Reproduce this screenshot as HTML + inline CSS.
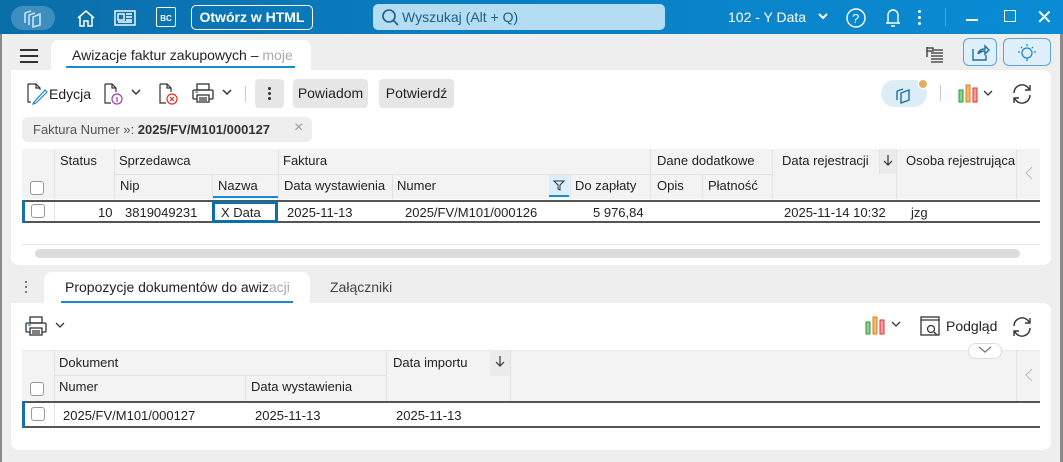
<!DOCTYPE html>
<html><head><meta charset="utf-8"><style>
*{box-sizing:border-box;margin:0;padding:0}
body{width:1063px;height:462px;overflow:hidden;background:#eeeeee;font-family:"Liberation Sans",sans-serif;font-size:13px;color:#222;position:relative}
.a{position:absolute}
.top{left:0;top:0;width:1063px;height:34px;background:linear-gradient(90deg,#0a6ea8 0%,#0a7cc0 40%,#0a8cd4 100%)}
.panel{background:#fff;border-radius:8px}
.hd{background:#f3f3f3}
.t{position:absolute;white-space:nowrap}
.cb{position:absolute;width:14px;height:14px;border:1px solid #999;border-radius:3px;background:#fff}
.vl{position:absolute;width:1px;background:#e2e2e2}
.btn{position:absolute;background:#e6e6e6;border-radius:4px;height:29px;line-height:29px;text-align:center}
.dot{position:absolute;width:3px;height:3px;border-radius:2px}
</style></head><body>
<div class="a" style="left:0;top:0;width:2px;height:462px;background:#8a8a8a"></div>
<div class="a" style="right:0;top:0;width:3px;height:462px;background:#8a8a8a"></div>
<div class="a top"></div>
<div class="a" style="left:11px;top:6px;width:44px;height:24px;border-radius:12px;background:#3e8fc0"></div>
<svg class="a" style="left:20px;top:8px" width="26" height="20" viewBox="0 0 26 20" fill="none" stroke="#dfefff" stroke-width="1.4"><path d="M5 5 L11 3 M5 5 V15 M9 7 L15 5 M9 7 V17 M13 9 L20 6 V17 L13 19Z"/></svg>
<svg class="a" style="left:76px;top:9px" width="20" height="18" viewBox="0 0 20 18" fill="none" stroke="#fff" stroke-width="1.5"><path d="M2 9 L10 2 L18 9 M4 8 V17 H8 V12 H12 V17 H16 V8"/></svg>
<svg class="a" style="left:114px;top:10px" width="22" height="16" viewBox="0 0 22 16" fill="none" stroke="#fff" stroke-width="1.4"><rect x="1" y="1" width="20" height="14"/><rect x="4" y="4" width="6" height="6"/><path d="M12 4h6M12 7h6M12 10h6M4 12h14"/></svg>
<div class="a" style="left:156px;top:7px;width:20px;height:20px;border:1.5px solid #fff;border-radius:2px;color:#fff;font-size:8px;font-weight:bold;text-align:center;line-height:22px">BC</div>
<div class="a" style="left:191px;top:5px;width:122px;height:25px;border:1.5px solid #fff;border-radius:5px;color:#fff;font-weight:bold;font-size:14px;text-align:center;line-height:22px">Otwórz w HTML</div>
<div class="a" style="left:373px;top:4px;width:292px;height:26px;border-radius:5px;background:#b4dcf2"></div>
<svg class="a" style="left:381px;top:8px" width="18" height="18" viewBox="0 0 18 18" fill="none" stroke="#1a5f8c" stroke-width="1.6"><circle cx="8" cy="8" r="6"/><path d="M12.5 12.5 L17 17"/></svg>
<div class="t" style="left:402px;top:9px;color:#1a5f8c;font-size:14px">Wyszukaj (Alt + Q)</div>
<div class="t" style="left:728px;top:9px;color:#fff;font-size:14px">102 - Y Data</div>
<svg class="a" style="left:817px;top:12px" width="12" height="9"><path d="M2 2 L6 6 L10 2" stroke="#fff" stroke-width="2" fill="none"/></svg>
<svg class="a" style="left:845px;top:7px" width="22" height="22" fill="none" stroke="#fff" stroke-width="1.4"><circle cx="11" cy="11" r="9"/><text x="7" y="16" fill="#fff" stroke="none" font-size="13" font-family="Liberation Sans">?</text></svg>
<svg class="a" style="left:883px;top:6px" width="20" height="22" fill="none" stroke="#fff" stroke-width="1.4"><path d="M5 17 V9 a5 5 0 0 1 10 0 V17 H3 H17 M8 20 H12"/></svg>
<div class="dot" style="left:918px;top:10px;background:#fff"></div>
<div class="dot" style="left:918px;top:16px;background:#fff"></div>
<div class="dot" style="left:918px;top:22px;background:#fff"></div>
<div class="a" style="left:945px;top:8px;width:1px;height:18px;background:#4aa8dd"></div>
<div class="a" style="left:966px;top:19px;width:12px;height:1.5px;background:#fff"></div>
<div class="a" style="left:1004px;top:10px;width:12px;height:12px;border:1.5px solid #fff"></div>
<div class="t" style="left:1036px;top:5px;color:#fff;font-size:20px">✕</div>

<div class="a" style="left:20px;top:49px;width:18px;height:2px;background:#333;box-shadow:0 6px 0 #333,0 12px 0 #333"></div>
<div class="a" style="left:51px;top:40px;width:260px;height:32px;background:#fff;border-radius:8px 8px 0 0"></div>
<div class="t" style="left:72px;top:47px;font-size:14px;color:#222">Awizacje faktur zakupowych – <span style="color:#aaa">moje</span></div>
<div class="a" style="left:66px;top:66px;width:229px;height:2px;background:#1a8ad4"></div>
<svg class="a" style="left:925px;top:45px" width="20" height="20" fill="none" stroke="#333" stroke-width="1.3"><path d="M2 2 V12 M2 3 H8 V6 H2 M6 8 H18 M6 11 H18 M6 14 H18 M6 17 H18 M9 5 H18"/></svg>
<div class="a" style="left:963px;top:38px;width:34px;height:28px;border:1px solid #5aa6d6;border-radius:6px;background:#e0f0fa"></div>
<svg class="a" style="left:970px;top:42px" width="20" height="20" fill="none" stroke="#1a6fa8" stroke-width="1.4"><path d="M3 7 V18 H16 V13 M8 12 C9 8 12 7 15 7 V4 L19 8 L15 12 V9 C12 9 10 10 8 12"/></svg>
<div class="a" style="left:1003px;top:38px;width:48px;height:28px;border:1px solid #5aa6d6;border-radius:6px;background:#e0f0fa"></div>
<svg class="a" style="left:1015px;top:42px" width="24" height="22" fill="none" stroke="#1a8ad4" stroke-width="1.3"><circle cx="12" cy="11" r="5"/><path d="M12 16 V19 M12 2 V4 M3 10 H5 M19 10 H21 M6 5 L7 6 M18 5 L17 6"/></svg>

<div class="a panel" style="left:11px;top:70px;width:1040px;height:195px;border-top-left-radius:0"></div>
<svg class="a" style="left:24px;top:81px" width="24" height="24" fill="none" stroke="#333" stroke-width="1.2"><path d="M4 3 H12 L16 7 V9 M4 3 V21 H7 M12 3 V7 H16"/><path d="M10 21 L21 9 L23 11 L12 22 L9 23Z" stroke="#1a8ad4"/></svg>
<div class="t" style="left:49px;top:86px;font-size:14px">Edycja</div>
<svg class="a" style="left:102px;top:81px" width="22" height="24" fill="none" stroke="#333" stroke-width="1.2"><path d="M3 3 H10 L14 7 V11 M3 3 V22 H9 M10 3 V7 H14"/><circle cx="15" cy="18" r="5" stroke="#a040b0"/><path d="M15 16 V21" stroke="#a040b0"/></svg>
<svg class="a" style="left:131px;top:89px" width="10" height="7"><path d="M1 1 L5 5 L9 1" stroke="#333" stroke-width="1.5" fill="none"/></svg>
<svg class="a" style="left:157px;top:81px" width="22" height="24" fill="none" stroke="#333" stroke-width="1.2"><path d="M3 3 H10 L14 7 V11 M3 3 V22 H9 M10 3 V7 H14"/><circle cx="15" cy="18" r="5" stroke="#e0302a"/><path d="M13 16 L17 20 M17 16 L13 20" stroke="#e0302a"/></svg>
<svg class="a" style="left:191px;top:82px" width="24" height="22" fill="none" stroke="#333" stroke-width="1.3"><rect x="6" y="2" width="12" height="6"/><rect x="2" y="8" width="20" height="9" rx="1"/><rect x="6" y="13" width="12" height="7" fill="#fff"/><path d="M8 16 H16 M8 18 H16"/><path d="M4 10 H7" stroke="#1a8ad4"/></svg>
<svg class="a" style="left:222px;top:89px" width="10" height="7"><path d="M1 1 L5 5 L9 1" stroke="#333" stroke-width="1.5" fill="none"/></svg>
<div class="a" style="left:245px;top:86px;width:1px;height:16px;background:#ccc"></div>
<div class="btn" style="left:255px;top:79px;width:29px"></div>
<div class="dot" style="left:268px;top:87px;background:#333"></div>
<div class="dot" style="left:268px;top:92px;background:#333"></div>
<div class="dot" style="left:268px;top:97px;background:#333"></div>
<div class="btn" style="left:293px;top:79px;width:75px;font-size:14px">Powiadom</div>
<div class="btn" style="left:379px;top:79px;width:75px;font-size:14px">Potwierdź</div>
<div class="a" style="left:881px;top:80px;width:46px;height:27px;border-radius:14px;background:#dcedf8"></div>
<svg class="a" style="left:893px;top:83px" width="24" height="22" fill="none" stroke="#1a6fa8" stroke-width="1.4"><path d="M4 8 L10 6 M4 8 V17 M8 10 L16 7 V17 L8 20Z"/></svg>
<div class="a" style="left:918px;top:79px;width:10px;height:10px;border-radius:5px;background:#e0b060;border:1.5px solid #fff"></div>
<div class="a" style="left:940px;top:85px;width:1px;height:16px;background:#ccc"></div>
<svg class="a" style="left:958px;top:83px" width="22" height="20"><rect x="1" y="7" width="4" height="12" fill="#8ad08a" stroke="#2a9a3a"/><rect x="8" y="2" width="4" height="17" fill="#f5b870" stroke="#e07a20"/><rect x="15" y="5" width="4" height="14" fill="#f0a0a0" stroke="#e03030"/></svg>
<svg class="a" style="left:983px;top:90px" width="10" height="7"><path d="M1 1 L5 5 L9 1" stroke="#333" stroke-width="1.3" fill="none"/></svg>
<svg class="a" style="left:1010px;top:82px" width="24" height="24" fill="none" stroke="#333" stroke-width="1.4"><path d="M4 11 A8 8 0 0 1 19 7 M20 3 V8 H15 M20 13 A8 8 0 0 1 5 17 M4 21 V16 H9"/></svg>

<div class="a" style="left:22px;top:117px;width:290px;height:25px;border-radius:6px;background:#eeeeee"></div>
<div class="t" style="left:33px;top:122px;color:#555">Faktura Numer »: <span style="color:#333;font-weight:bold">2025/FV/M101/000127</span></div>
<div class="t" style="left:294px;top:119px;color:#999;font-size:16px">×</div>

<!-- grid1 -->
<div class="a hd" style="left:22px;top:149px;width:1018px;height:50px"></div>
<div class="a" style="left:114px;top:174px;width:658px;height:1px;background:#e2e2e2"></div>
<div class="vl" style="left:54px;top:149px;height:50px"></div>
<div class="vl" style="left:114px;top:149px;height:50px"></div>
<div class="vl" style="left:212px;top:174px;height:25px"></div>
<div class="vl" style="left:278px;top:149px;height:50px"></div>
<div class="vl" style="left:392px;top:174px;height:25px"></div>
<div class="vl" style="left:570px;top:174px;height:25px"></div>
<div class="vl" style="left:650px;top:149px;height:50px"></div>
<div class="vl" style="left:702px;top:174px;height:25px"></div>
<div class="vl" style="left:772px;top:149px;height:50px"></div>
<div class="vl" style="left:879px;top:149px;height:25px"></div>
<div class="vl" style="left:896px;top:149px;height:50px"></div>
<div class="vl" style="left:1016px;top:149px;height:50px"></div>
<div class="a" style="left:880px;top:149px;width:16px;height:25px;background:#ebebeb"></div>
<div class="a" style="left:549px;top:175px;width:20px;height:22px;background:#dbeefa;border-bottom:2px solid #1a8ad4"></div>
<div class="a" style="left:213px;top:196px;width:65px;height:2px;background:#1a8ad4"></div>
<div class="t" style="left:60px;top:153px">Status</div>
<div class="t" style="left:119px;top:153px">Sprzedawca</div>
<div class="t" style="left:283px;top:153px">Faktura</div>
<div class="t" style="left:657px;top:153px">Dane dodatkowe</div>
<div class="t" style="left:782px;top:153px">Data rejestracji</div>
<svg class="a" style="left:883px;top:154px" width="10" height="13" fill="none" stroke="#333" stroke-width="1.2"><path d="M5 1 V11 M1 7 L5 11 L9 7"/></svg>
<div class="t" style="left:906px;top:153px">Osoba rejestrująca</div>
<svg class="a" style="left:1025px;top:166px" width="8" height="14" fill="none" stroke="#bbb"><path d="M7 1 L1 7 L7 13"/></svg>
<div class="t" style="left:120px;top:178px">Nip</div>
<div class="t" style="left:218px;top:178px">Nazwa</div>
<div class="t" style="left:284px;top:178px">Data wystawienia</div>
<div class="t" style="left:397px;top:178px">Numer</div>
<svg class="a" style="left:553px;top:179px" width="12" height="12" fill="none" stroke="#333" stroke-width="1"><path d="M1 2 H11 L7 6 V11 L5 10 V6Z"/></svg>
<div class="t" style="left:575px;top:178px">Do zapłaty</div>
<div class="t" style="left:657px;top:178px">Opis</div>
<div class="t" style="left:708px;top:178px">Płatność</div>
<div class="cb" style="left:30px;top:181px"></div>
<div class="a" style="left:22px;top:200px;width:1018px;height:2px;background:#555"></div>
<div class="a" style="left:22px;top:221px;width:1018px;height:2px;background:#555"></div>
<div class="a" style="left:22px;top:200px;width:3px;height:23px;background:#1a6fa8"></div>
<div class="vl" style="left:54px;top:202px;height:19px"></div>
<div class="cb" style="left:31px;top:204px"></div>
<div class="a" style="left:212px;top:201px;width:66px;height:22px;border:3px solid #0a6eb0"></div>
<div class="t" style="left:98px;top:205px">10</div>
<div class="t" style="left:125px;top:205px">3819049231</div>
<div class="t" style="left:221px;top:205px">X Data</div>
<div class="t" style="left:287px;top:205px">2025-11-13</div>
<div class="t" style="left:405px;top:205px">2025/FV/M101/000126</div>
<div class="t" style="left:593px;top:205px">5 976,84</div>
<div class="t" style="left:784px;top:205px">2025-11-14 10:32</div>
<div class="t" style="left:911px;top:205px">jzg</div>
<div class="a" style="left:22px;top:244px;width:1018px;height:1px;background:#e6e6e6"></div>
<div class="a" style="left:35px;top:249px;width:985px;height:9px;border-radius:5px;background:#dcdcdc"></div>

<!-- bottom tabs -->
<div class="dot" style="left:25px;top:281px;width:2px;height:2px;background:#555"></div>
<div class="dot" style="left:25px;top:286px;width:2px;height:2px;background:#555"></div>
<div class="dot" style="left:25px;top:291px;width:2px;height:2px;background:#555"></div>
<div class="a" style="left:44px;top:272px;width:266px;height:32px;background:#fff;border-radius:8px 8px 0 0"></div>
<div class="t" style="left:65px;top:279px;font-size:14px">Propozycje dokumentów do awiz<span style="color:#aaa">acji</span></div>
<div class="a" style="left:61px;top:301px;width:232px;height:2px;background:#1a8ad4"></div>
<div class="t" style="left:330px;top:279px;color:#444;font-size:14px">Załączniki</div>
<div class="a panel" style="left:11px;top:303px;width:1040px;height:147px;border-top-left-radius:0"></div>
<svg class="a" style="left:24px;top:315px" width="24" height="22" fill="none" stroke="#333" stroke-width="1.3"><rect x="6" y="2" width="12" height="6"/><rect x="2" y="8" width="20" height="9" rx="1"/><rect x="6" y="13" width="12" height="7" fill="#fff"/><path d="M8 16 H16 M8 18 H16"/><path d="M4 10 H7" stroke="#1a8ad4"/></svg>
<svg class="a" style="left:55px;top:322px" width="10" height="7"><path d="M1 1 L5 5 L9 1" stroke="#333" stroke-width="1.3" fill="none"/></svg>
<svg class="a" style="left:865px;top:315px" width="22" height="20"><rect x="1" y="7" width="4" height="12" fill="#8ad08a" stroke="#2a9a3a"/><rect x="8" y="2" width="4" height="17" fill="#f5b870" stroke="#e07a20"/><rect x="15" y="5" width="4" height="14" fill="#f0a0a0" stroke="#e03030"/></svg>
<svg class="a" style="left:891px;top:321px" width="10" height="7"><path d="M1 1 L5 5 L9 1" stroke="#333" stroke-width="1.3" fill="none"/></svg>
<svg class="a" style="left:914px;top:315px" width="28" height="22" fill="none" stroke="#333" stroke-width="1.3"><rect x="7" y="2" width="18" height="18"/><path d="M7 5 H25"/><circle cx="17" cy="14" r="3.5"/><path d="M20 17 L23 20"/></svg>
<div class="t" style="left:946px;top:318px;font-size:14px">Podgląd</div>
<svg class="a" style="left:1010px;top:315px" width="24" height="24" fill="none" stroke="#333" stroke-width="1.4"><path d="M4 11 A8 8 0 0 1 19 7 M20 3 V8 H15 M20 13 A8 8 0 0 1 5 17 M4 21 V16 H9"/></svg>

<div class="a hd" style="left:22px;top:350px;width:1018px;height:51px;border-top:1px solid #e6e6e6"></div>
<div class="a" style="left:54px;top:375px;width:332px;height:1px;background:#e2e2e2"></div>
<div class="vl" style="left:54px;top:350px;height:51px"></div>
<div class="vl" style="left:245px;top:375px;height:26px"></div>
<div class="vl" style="left:386px;top:350px;height:51px"></div>
<div class="a" style="left:490px;top:350px;width:20px;height:26px;background:#ebebeb"></div>
<div class="vl" style="left:510px;top:350px;height:51px"></div>
<div class="vl" style="left:1016px;top:350px;height:51px"></div>
<div class="a" style="left:968px;top:343px;width:34px;height:16px;border-radius:8px;background:#fff;border:1px solid #ddd"></div>
<svg class="a" style="left:978px;top:346px" width="14" height="8"><path d="M1 1 L7 6 L13 1" stroke="#777" stroke-width="1.3" fill="none"/></svg>
<div class="t" style="left:59px;top:355px">Dokument</div>
<div class="t" style="left:393px;top:355px">Data importu</div>
<svg class="a" style="left:495px;top:355px" width="10" height="13" fill="none" stroke="#333" stroke-width="1.2"><path d="M5 1 V11 M1 7 L5 11 L9 7"/></svg>
<svg class="a" style="left:1025px;top:368px" width="8" height="14" fill="none" stroke="#bbb"><path d="M7 1 L1 7 L7 13"/></svg>
<div class="t" style="left:59px;top:379px">Numer</div>
<div class="t" style="left:251px;top:379px">Data wystawienia</div>
<div class="cb" style="left:30px;top:382px"></div>
<div class="a" style="left:22px;top:401px;width:1018px;height:2px;background:#555"></div>
<div class="a" style="left:22px;top:426px;width:1018px;height:2px;background:#555"></div>
<div class="a" style="left:22px;top:401px;width:3px;height:27px;background:#1a6fa8"></div>
<div class="vl" style="left:54px;top:403px;height:23px"></div>
<div class="cb" style="left:31px;top:407px"></div>
<div class="t" style="left:63px;top:408px">2025/FV/M101/000127</div>
<div class="t" style="left:255px;top:408px">2025-11-13</div>
<div class="t" style="left:396px;top:408px">2025-11-13</div>
</body></html>
